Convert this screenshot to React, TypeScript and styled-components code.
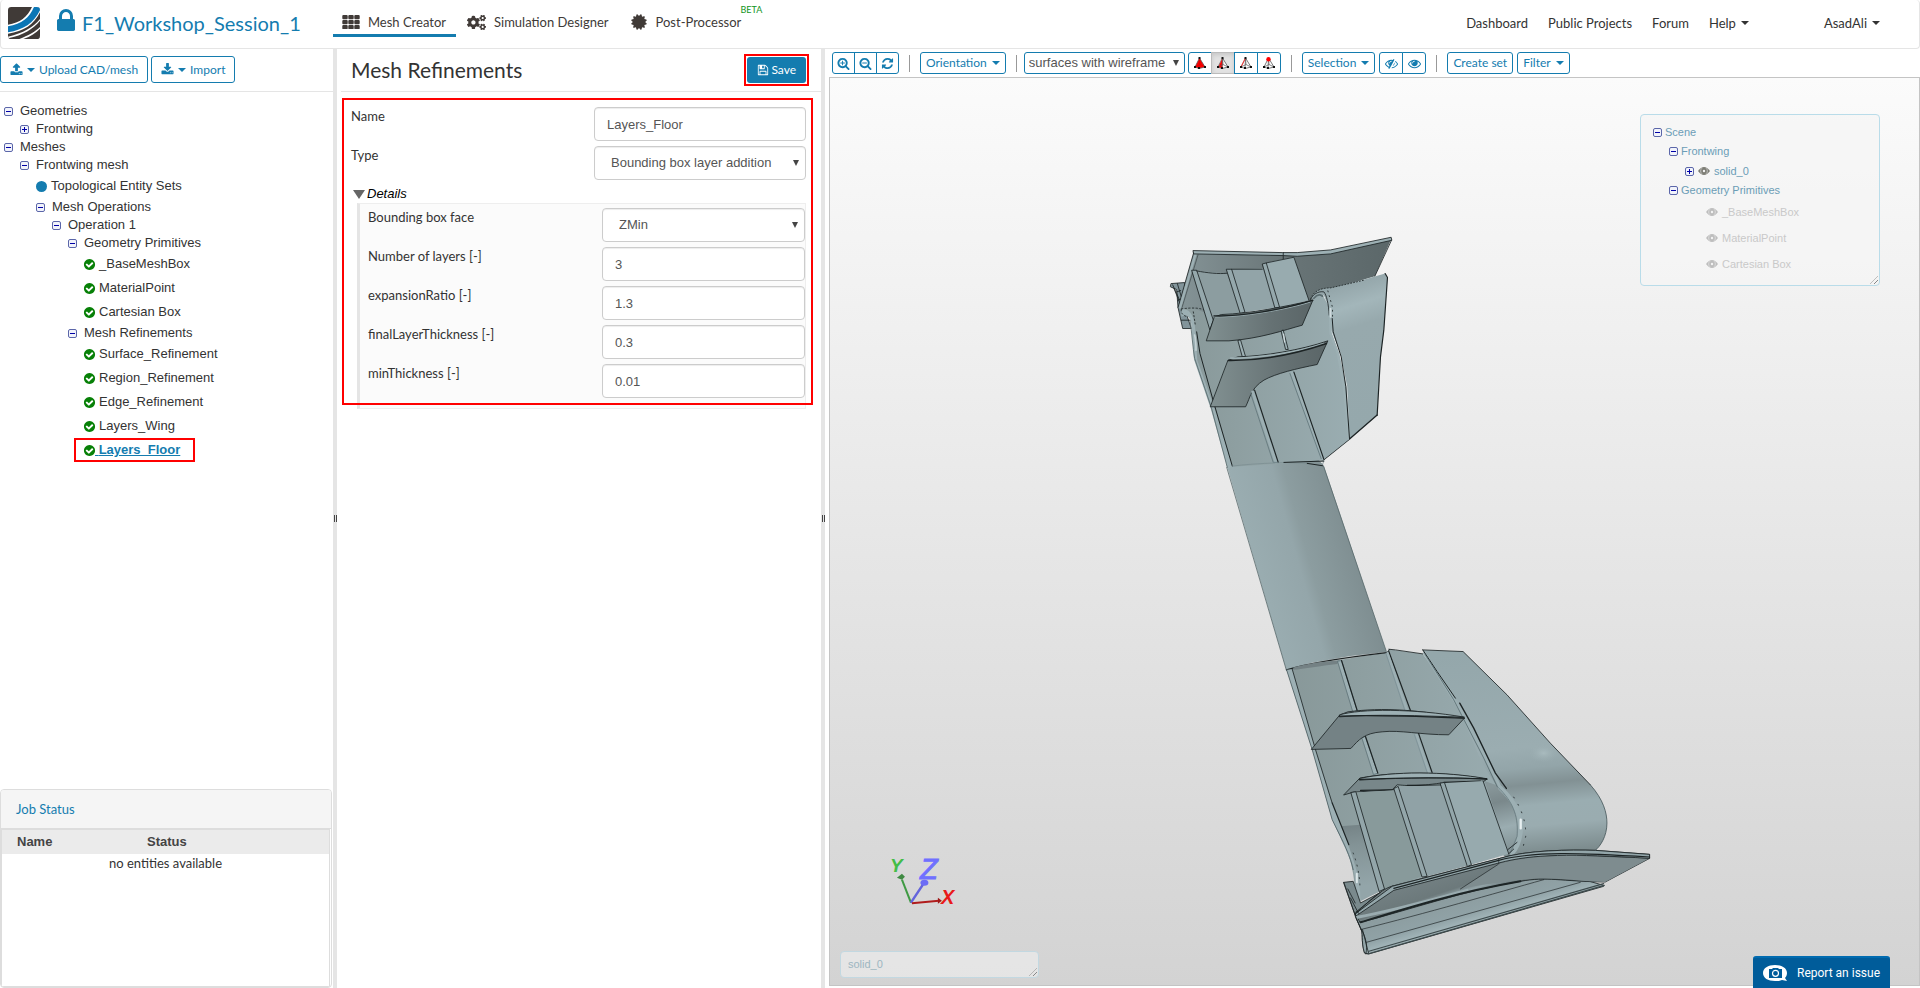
import React from "react";
import styled, { createGlobalStyle, css } from "styled-components";
import { FaCogs } from "react-icons/fa";

const blue = "#147caf";
const line = "#e5e5e5";
const sans = `"Liberation Sans", Arial, sans-serif`;
const lato = `Lato, "Liberation Sans", sans-serif`;

const GlobalStyle = createGlobalStyle`
  *, *::before, *::after { box-sizing: border-box; }
  body { margin: 0; background: #fff; color: #333; font: 13px/20px ${lato}; }
  ul { list-style: none; margin: 0; padding: 0; }
  button, input, select { margin: 0; font: inherit; color: inherit; }
  a { color: inherit; text-decoration: none; }
`;

/* ---------- icons ---------- */

const glyphs = {
  lock: "M640 768h512v-192q0-106-75-181t-181-75-181 75-75 181v192zm832 96v576q0 40-28 68t-68 28h-960q-40 0-68-28t-28-68v-576q0-40 28-68t68-28h32v-192q0-184 132-316t316-132 316 132 132 316v192h32q40 0 68 28t28 68z",
  certificate:
    "M1504 896l138 135q30 28 20 70-12 41-52 51l-188 48 53 186q12 41-19 70-29 31-70 19l-186-53-48 188q-10 40-51 52-12 2-19 2-31 0-51-22l-135-138-135 138q-28 30-70 20-41-11-51-52l-48-188-186 53q-41 12-70-19-31-29-19-70l53-186-188-48q-40-10-52-51-10-42 20-70l138-135-138-135q-30-28-20-70 12-41 52-51l188-48-53-186q-12-41 19-70 29-31 70-19l186 53 48-188q10-41 51-51 41-12 70 19l135 139 135-139q29-30 70-19 41 10 51 51l48 188 186-53q41-12 70 19 31 29 19 70l-53 186 188 48q40 10 52 51 10 42-20 70z",
  upload:
    "M1344 1472q0-26-19-45t-45-19-45 19-19 45 19 45 45 19 45-19 19-45zm256 0q0-26-19-45t-45-19-45 19-19 45 19 45 45 19 45-19 19-45zm128-224v320q0 40-28 68t-68 28h-1472q-40 0-68-28t-28-68v-320q0-40 28-68t68-28h427q21 56 70.5 92t110.5 36h256q61 0 110.5-36t70.5-92h427q40 0 68 28t28 68zm-325-648q-17 40-59 40h-256v448q0 26-19 45t-45 19h-256q-26 0-45-19t-19-45v-448h-256q-42 0-59-40-17-39 14-69l448-448q18-19 45-19t45 19l448 448q31 30 14 69z",
  download:
    "M1344 1344q0-26-19-45t-45-19-45 19-19 45 19 45 45 19 45-19 19-45zm256 0q0-26-19-45t-45-19-45 19-19 45 19 45 45 19 45-19 19-45zm128-224v320q0 40-28 68t-68 28h-1472q-40 0-68-28t-28-68v-320q0-40 28-68t68-28h465l135 136q58 56 136 56t136-56l136-136h464q40 0 68 28t28 68zm-325-569q17 41-14 70l-448 448q-18 19-45 19t-45-19l-448-448q-31-29-14-70 17-39 59-39h256v-448q0-26 19-45t45-19h256q26 0 45 19t19 45v448h256q42 0 59 39z",
  floppy:
    "M512 1536h768v-384h-768v384zm896 0h128v-896q0-14-10-38.5t-20-34.5l-281-281q-10-10-34-20t-39-10v416q0 40-28 68t-68 28h-576q-40 0-68-28t-28-68v-416h-128v1280h128v-416q0-40 28-68t68-28h832q40 0 68 28t28 68v416zm-384-928v-320q0-13-9.5-22.5t-22.5-9.5h-192q-13 0-22.5 9.5t-9.5 22.5v320q0 13 9.5 22.5t22.5 9.5h192q13 0 22.5-9.5t9.5-22.5zm640 32v928q0 40-28 68t-68 28h-1344q-40 0-68-28t-28-68v-1344q0-40 28-68t68-28h928q40 0 88 20t76 48l280 280q28 28 48 76t20 88z",
  zoomIn:
    "M1088 800v64q0 13-9.5 22.5t-22.5 9.5h-224v224q0 13-9.5 22.5t-22.5 9.5h-64q-13 0-22.5-9.5t-9.5-22.5v-224h-224q-13 0-22.5-9.5t-9.5-22.5v-64q0-13 9.5-22.5t22.5-9.5h224v-224q0-13 9.5-22.5t22.5-9.5h64q13 0 22.5 9.5t9.5 22.5v224h224q13 0 22.5 9.5t9.5 22.5zm128 32q0-185-131.5-316.5t-316.5-131.5-316.5 131.5-131.5 316.5 131.5 316.5 316.5 131.5 316.5-131.5 131.5-316.5zm512 832q0 53-37.5 90.5t-90.5 37.5q-54 0-90-38l-343-342q-179 124-399 124-143 0-273.5-55.5t-225-150-150-225-55.5-273.5 55.5-273.5 150-225 225-150 273.5-55.5 273.5 55.5 225 150 150 225 55.5 273.5q0 220-124 399l343 343q37 37 37 90z",
  zoomOut:
    "M1088 800v64q0 13-9.5 22.5t-22.5 9.5h-576q-13 0-22.5-9.5t-9.5-22.5v-64q0-13 9.5-22.5t22.5-9.5h576q13 0 22.5 9.5t9.5 22.5zm128 32q0-185-131.5-316.5t-316.5-131.5-316.5 131.5-131.5 316.5 131.5 316.5 316.5 131.5 316.5-131.5 131.5-316.5zm512 832q0 53-37.5 90.5t-90.5 37.5q-54 0-90-38l-343-342q-179 124-399 124-143 0-273.5-55.5t-225-150-150-225-55.5-273.5 55.5-273.5 150-225 225-150 273.5-55.5 273.5 55.5 225 150 150 225 55.5 273.5q0 220-124 399l343 343q37 37 37 90z",
  refresh:
    "M1639 1056q0 5-1 7-64 268-268 434.5t-478 166.5q-146 0-282.5-55t-243.5-157l-129 129q-19 19-45 19t-45-19-19-45v-448q0-26 19-45t45-19h448q26 0 45 19t19 45-19 45l-137 137q71 66 161 102t187 36q134 0 250-65t186-179q11-17 53-117 8-23 30-23h192q13 0 22.5 9.5t9.5 22.5zm25-800v448q0 26-19 45t-45 19h-448q-26 0-45-19t-19-45 19-45l138-138q-148-137-349-137-134 0-250 65t-186 179q-11 17-53 117-8 23-30 23h-199q-13 0-22.5-9.5t-9.5-22.5v-7q65-268 270-434.5t480-166.5q146 0 284 55.5t245 156.5l130-129q19-19 45-19t45 19 19 45z",
  eye: "M1664 960q-152-236-381-353 61 104 61 225 0 185-131.5 316.5t-316.5 131.5-316.5-131.5-131.5-316.5q0-121 61-225-229 117-381 353 133 205 333.5 326.5t434.5 121.5 434.5-121.5 333.5-326.5zm-720-384q0-20-14-34t-34-14q-125 0-214.5 89.5t-89.5 214.5q0 20 14 34t34 14 34-14 14-34q0-86 61-147t147-61q20 0 34-14t14-34zm848 384q0 34-20 69-140 230-376.5 368.5t-499.5 138.5-499.5-139-376.5-368q-20-35-20-69t20-69q140-229 376.5-368t499.5-139 499.5 139 376.5 368q20 35 20 69z",
  eyeSlash:
    "M555 1335l78-141q-87-63-136-159t-49-203q0-121 61-225-229 117-381 353 167 258 427 375zm389-759q0-20-14-34t-34-14q-125 0-214.5 89.5t-89.5 214.5q0 20 14 34t34 14 34-14 14-34q0-86 61-147t147-61q20 0 34-14t14-34zm363-191q0 7-1 9-106 189-316 567t-315 566l-49 89q-10 16-28 16-12 0-134-70-16-10-16-28 0-12 44-87-143-65-263.5-173t-208.5-245q-20-31-20-69t20-69q153-235 380-371t496-136q89 0 180 17l54-97q10-16 28-16 5 0 18 6t31 15.5 33 18.5 31.5 18.5 19.5 11.5q16 10 16 27zm37 447q0 139-79 253.5t-209 164.5l280-502q8 45 8 84zm448 128q0 35-20 69-39 64-109 145-150 172-347.5 267t-419.5 95l74-132q212-18 392.5-137t301.5-307q-115-179-282-294l63-112q95 64 182.5 153t144.5 184q20 34 20 69z",
  check:
    "M1412 734q0-28-18-46l-91-90q-19-19-45-19t-45 19l-408 407-226-226q-19-19-45-19t-45 19l-91 90q-18 18-18 46 0 27 18 45l362 362q19 19 45 19 27 0 46-19l543-543q18-18 18-45zm252 162q0 209-103 385.5t-279.5 279.5-385.5 103-385.5-103-279.5-279.5-103-385.5 103-385.5 279.5-279.5 385.5-103 385.5 103 279.5 279.5 103 385.5z",
};

const GlyphSvg = styled.svg`
  display: block;
  flex: none;
  fill: currentColor;
`;

const Glyph = ({ name, size = 14 }: { name: keyof typeof glyphs; size?: number }) => (
  <GlyphSvg width={size} height={size} viewBox="0 0 1792 1792" aria-hidden="true">
    <path d={glyphs[name]} />
  </GlyphSvg>
);

const GridIcon = () => (
  <GlyphSvg width="18" height="14" viewBox="0 0 18 14" aria-hidden="true">
    {[0, 5, 10].map((y) =>
      [0, 6, 12].map((x) => <rect key={`${x}-${y}`} x={x + 0.3} y={y} width="5.4" height="4.2" rx="1" />)
    )}
  </GlyphSvg>
);

const Logo = () => (
  <GlyphSvg width="32" height="32" viewBox="0 0 96 96" aria-hidden="true">
    <clipPath id="logoClip">
      <rect width="96" height="96" rx="10" />
    </clipPath>
    <g clipPath="url(#logoClip)">
      <rect width="96" height="96" fill="#403a37" />
      <path d="M0 53C36 48 58 30 72 0H96V96H0z" fill="#fff" />
      <path d="M0 58C42 51 64 32 78 0H96V10C77 48 47 69 0 76z" fill="#0b76b5" />
      <path d="M0 80C48 74 78 52 96 16V36C76 61 46 78 0 89z" fill="#403a37" />
      <path d="M0 94C46 84 76 66 96 41V60C82 74 60 86 34 96H0z" fill="#403a37" />
      <path d="M46 96C68 88 84 78 96 65V96z" fill="#403a37" />
    </g>
  </GlyphSvg>
);

const ToggleBox = ({ open }: { open: boolean }) => (
  <GlyphSvg width="9" height="9" viewBox="0 0 9 9" aria-hidden="true">
    <rect x="0.5" y="0.5" width="8" height="8" rx="1.5" fill="#f1f3fb" stroke="#5b66a9" />
    <path d={open ? "M2 4h5v1H2z" : "M2 4h5v1H2zM4 2h1v5H4z"} fill="#0000a8" />
  </GlyphSvg>
);

const Dot = styled.span`
  width: 11px;
  height: 11px;
  border-radius: 50%;
  background: ${blue};
`;

const Caret = styled.span`
  display: inline-block;
  flex: none;
  border-top: 4px solid currentColor;
  border-left: 4px solid transparent;
  border-right: 4px solid transparent;
`;

const ResizeGrip = styled.span`
  position: absolute;
  right: 1px;
  bottom: 1px;
  width: 8px;
  height: 8px;
  background: repeating-linear-gradient(135deg, transparent 0 2px, #888 2px 3px);
  clip-path: polygon(100% 0, 100% 100%, 0 100%);
`;

/* ---------- page frame ---------- */

const Page = styled.div`
  display: flex;
  flex-direction: column;
  height: 100vh;
  overflow: hidden;
`;

const Header = styled.header`
  display: flex;
  flex: none;
  align-items: center;
  height: 49px;
  padding: 0 39px 0 7px;
  border: 1px solid ${line};
  border-top: 0;
  border-radius: 4px;
`;

const Project = styled.a`
  display: flex;
  align-items: center;
  width: 325px;
  padding-bottom: 2px;
  color: ${blue};
  font-size: 20px;
  line-height: 24px;
`;

const LockSlot = styled.span`
  margin: -4px 2px 0 12px;
`;

const Tabs = styled.nav`
  display: flex;
  align-items: flex-start;
  gap: 2px;
  height: 37px;
  align-self: flex-start;
`;

const Tab = styled.a<{ $active?: boolean }>`
  position: relative;
  display: flex;
  align-items: center;
  gap: 8px;
  height: 37px;
  padding: 10px 10px 0 9px;
  color: #403a37;
  border-bottom: 3px solid ${(p) => (p.$active ? blue : "transparent")};
`;

const Beta = styled.sup`
  position: absolute;
  top: 4px;
  right: -11px;
  color: #119422;
  font-size: 9px;
  line-height: 12px;
`;

const Menu = styled.nav`
  display: flex;
  align-items: center;
  gap: 20px;
  margin-left: auto;
  padding-bottom: 2px;
`;

const MenuLink = styled.a<{ $user?: boolean }>`
  display: flex;
  align-items: center;
  gap: 5px;
  margin-left: ${(p) => (p.$user ? "55px" : "0")};
`;

const Workspace = styled.main`
  display: grid;
  flex: 1;
  grid-template-columns: 333px 4px 484px 4px minmax(0, 1fr);
  min-height: 0;
`;

const Splitter = styled.div`
  display: flex;
  align-items: center;
  justify-content: center;
  background: ${line};

  &::before {
    content: "";
    width: 3px;
    height: 7px;
    border: solid #444;
    border-width: 0 1px;
  }
`;

const Panel = styled.section`
  display: flex;
  flex-direction: column;
  min-width: 0;
`;

const PanelBar = styled.div<{ $inset?: boolean }>`
  display: flex;
  flex: none;
  align-items: center;
  gap: 3px;
  height: 43px;
  padding-bottom: 1px;
  border-bottom: 1px solid ${line};
  ${(p) =>
    p.$inset &&
    css`
      justify-content: space-between;
      margin-left: 4px;
      padding: 0 12px 1px 10px;
    `}
`;

const outline = css`
  display: flex;
  align-items: center;
  color: ${blue};
  background: #fff;
  border: 1px solid ${blue};
  border-radius: 3px;
  font-size: 12px;
`;

const ActionButton = styled.button`
  ${outline}
  gap: 4px;
  height: 27px;
  padding: 0 9px;
`;

/* ---------- model tree ---------- */

const TreeArea = styled.div`
  flex: 1;
  min-height: 0;
  padding: 10px 4px;
  overflow: hidden;
  font-family: ${sans};
  font-size: 13px;
`;

const Branch = styled.ul`
  ul { padding-left: 16px; }
`;

const TreeRow = styled.div<{ $leaf?: boolean; $selected?: boolean }>`
  display: flex;
  align-items: center;
  gap: ${(p) => (p.$leaf ? "4px" : "7px")};
  height: ${(p) => (p.$leaf ? "24px" : "18px")};

  ${(p) =>
    p.$selected &&
    css`
      width: 121px;
      margin-left: -10px;
      padding-left: 8px;
      border: 2px solid #f00;
      gap: 0;

      a {
        color: ${blue};
        font-weight: bold;
        text-decoration: underline;
        white-space: pre;
      }
    `}
`;

const CheckMark = styled.span`
  color: #078007;
  width: 11px;
  display: flex;
  justify-content: center;
`;

type Node = { label: string; kids?: Node[]; closed?: boolean; icon?: "dot" | "check"; selected?: boolean };

const leaves = (...names: string[]): Node[] => names.map((label) => ({ label, icon: "check" }));

const tree: Node[] = [
  { label: "Geometries", kids: [{ label: "Frontwing", closed: true }] },
  {
    label: "Meshes",
    kids: [
      {
        label: "Frontwing mesh",
        kids: [
          { label: "Topological Entity Sets", icon: "dot" },
          {
            label: "Mesh Operations",
            kids: [
              {
                label: "Operation 1",
                kids: [
                  { label: "Geometry Primitives", kids: leaves("_BaseMeshBox", "MaterialPoint", "Cartesian Box") },
                  {
                    label: "Mesh Refinements",
                    kids: [
                      ...leaves("Surface_Refinement", "Region_Refinement", "Edge_Refinement", "Layers_Wing"),
                      { label: "Layers_Floor", icon: "check", selected: true },
                    ],
                  },
                ],
              },
            ],
          },
        ],
      },
    ],
  },
];

const TreeNode = ({ node }: { node: Node }) => (
  <li>
    <TreeRow $leaf={!!node.icon} $selected={node.selected}>
      {node.icon === "dot" && <Dot />}
      {node.icon === "check" && (
        <CheckMark>
          <Glyph name="check" size={13} />
        </CheckMark>
      )}
      {!node.icon && <ToggleBox open={!node.closed} />}
      <a href="#node">
        {node.selected && " "}
        {node.label}
      </a>
    </TreeRow>
    {node.kids && (
      <ul>
        {node.kids.map((kid) => (
          <TreeNode key={kid.label} node={kid} />
        ))}
      </ul>
    )}
  </li>
);

/* ---------- job status ---------- */

const Jobs = styled.section`
  flex: none;
  height: 199px;
  margin-right: 1px;
  padding-right: 1px;
  border: 1px solid #ddd;
  border-radius: 4px;
  overflow: hidden;
`;

const JobsTitle = styled.h2`
  margin: 0 -1px 0 0;
  padding: 9px 15px;
  color: ${blue};
  background: #f5f5f5;
  border-bottom: 1px solid #ddd;
  font-size: 13px;
  font-weight: normal;
  line-height: 20px;
`;

const JobsBody = styled.div`
  height: 158px;
  border: 1px solid #ddd;
`;

const JobsTable = styled.table`
  width: 100%;
  border-collapse: collapse;
  table-layout: fixed;

  th {
    width: 130px;
    height: 24px;
    padding: 0 0 0 15px;
    background: #ebebeb;
    color: #444;
    font: bold 13px/20px ${sans};
    text-align: left;
  }
  th + th { width: auto; }
  td {
    padding: 0;
    line-height: 18px;
    text-align: center;
  }
`;

/* ---------- refinement form ---------- */

const FormTitle = styled.h1`
  margin: 0;
  font-size: 21px;
  font-weight: normal;
  line-height: 28px;
`;

const SaveFrame = styled.span`
  padding: 1px;
  border: 2px solid #f00;
`;

const SaveButton = styled.button`
  display: flex;
  align-items: center;
  gap: 2px;
  height: 26px;
  padding: 0 10px;
  color: #fff;
  background: ${blue};
  border: 0;
  border-radius: 3px;
  font-size: 12px;
`;

const Form = styled.form`
  position: relative;
  margin: 6px 8px 0 5px;
  padding: 9px 7px 0 9px;

  &::after {
    content: "";
    position: absolute;
    inset: 0 0 4px;
    border: 2px solid #f00;
    pointer-events: none;
  }
`;

const Field = styled.div`
  display: flex;
  justify-content: space-between;
  height: 39px;
`;

const Label = styled.label`
  display: block;
  line-height: 18px;
`;

const fieldBox = css`
  height: 34px;
  width: 100%;
  color: #555;
  background: #fff;
  border: 1px solid #ccc;
  border-radius: 4px;
  box-shadow: inset 0 1px 1px rgba(0, 0, 0, 0.075);
  font-family: ${sans};
  font-size: 13px;
`;

const Control = styled.span<{ $inner?: boolean }>`
  position: relative;
  width: ${(p) => (p.$inner ? "203px" : "212px")};
`;

const TextInput = styled.input`
  ${fieldBox}
  padding: 0 12px;
`;

const Select = styled.select`
  ${fieldBox}
  appearance: none;
  padding: 0 16px;
`;

const SelectArrow = styled.span`
  position: absolute;
  top: 14px;
  right: 7px;
  border-top: 6px solid #444;
  border-left: 3px solid transparent;
  border-right: 3px solid transparent;
  pointer-events: none;
`;

const DetailsHeading = styled.h3`
  display: flex;
  align-items: center;
  gap: 2px;
  height: 18px;
  margin: 0 0 0 2px;
  color: #000;
  font: italic 13px/18px ${sans};

  &::before {
    content: "";
    border-top: 9px solid #666;
    border-left: 6px solid transparent;
    border-right: 6px solid transparent;
  }
`;

const Group = styled.div`
  margin-left: 6px;
  padding: 4px 0 5px 8px;
  background: #fbfbfb;
  border: 1px solid #eee;
  border-left: 3px solid ${line};
`;

type FieldSpec = { id: string; label: string; value: string; choice?: boolean };

const FormField = ({ spec, inner }: { spec: FieldSpec; inner?: boolean }) => (
  <Field>
    <Label htmlFor={spec.id}>{spec.label}</Label>
    <Control $inner={inner}>
      {spec.choice ? (
        <>
          <Select id={spec.id} defaultValue={spec.value}>
            <option>{spec.value}</option>
          </Select>
          <SelectArrow />
        </>
      ) : (
        <TextInput id={spec.id} defaultValue={spec.value} />
      )}
    </Control>
  </Field>
);

const mainFields: FieldSpec[] = [
  { id: "name", label: "Name", value: "Layers_Floor" },
  { id: "type", label: "Type", value: "Bounding box layer addition", choice: true },
];

const detailFields: FieldSpec[] = [
  { id: "face", label: "Bounding box face", value: "ZMin", choice: true },
  { id: "layers", label: "Number of layers [-]", value: "3" },
  { id: "ratio", label: "expansionRatio [-]", value: "1.3" },
  { id: "final", label: "finalLayerThickness [-]", value: "0.3" },
  { id: "min", label: "minThickness [-]", value: "0.01" },
];

/* ---------- 3D viewer ---------- */

const Viewer = styled(Panel)`
  padding: 0 0 2px 4px;
`;

const Toolbar = styled.div`
  display: flex;
  flex: none;
  align-items: center;
  height: 28px;
  padding: 0 3px;
`;

const ToolButton = styled.button`
  ${outline}
  gap: 5px;
  height: 22px;
  padding: 0 5px;
  white-space: nowrap;
`;

const ToolSet = styled.div`
  display: flex;
  gap: 4px;
`;

const ToolGroup = styled.div<{ $narrow?: boolean }>`
  display: flex;

  button {
    justify-content: center;
    width: ${(p) => (p.$narrow ? "23px" : "24px")};
    padding: 0;
    border-radius: 0;
  }
  button + button { margin-left: -1px; }
  button:first-child { border-radius: 3px 0 0 3px; }
  button:last-child { border-radius: 0 3px 3px 0; }
  button[aria-pressed="true"] {
    background: #e2e2e2;
    border-color: #bbb;
    box-shadow: inset 0 2px 4px rgba(0, 0, 0, 0.12);
  }
`;

const Divider = styled.span`
  width: 1px;
  height: 17px;
  margin: 0 10px;
  background: #999;
`;

const RenderMode = styled.span`
  position: relative;
  margin: 0 3px 0 -3px;

  select {
    display: block;
    width: 161px;
    height: 22px;
    padding: 0 4px;
    appearance: none;
    color: #555;
    background: #fff;
    border: 1px solid ${blue};
    border-radius: 3px;
    font: 13px/18px ${sans};
  }
  ${SelectArrow} { top: 8px; right: 6px; }
`;

const PickIcon = ({ mode }: { mode: "solid" | "face" | "edge" | "point" }) => (
  <GlyphSvg width="12" height="12" viewBox="0 0 12 12" aria-hidden="true">
    <path d="M5.500 1 1 10l4 1.500 6-1.500z" fill={mode === "solid" ? "#f00" : "#fff"} stroke="#555" strokeWidth=".8" />
    {mode === "face" && <path d="M5.500 1 1.500 10 5.500 11.500z" fill="#f00" />}
    <path d="M5.500 1 5 11.500M1 10 6 7.500 11 10M5.500 1 6 7.500" fill="none" stroke={mode === "solid" ? "#d00" : "#555"} strokeWidth=".7" />
    {mode === "edge" && <path d="M5.500 1 1 10" stroke="#f33" strokeWidth="1" />}
    <path d="M0 9h2v2H0zM4 10h2v2H4zM10 9h2v2h-2z" fill="#111" />
    {mode === "point" ? <circle cx="5.500" cy="2.200" r="2.200" fill="#f00" /> : <path d="M4.500 0h2v2h-2z" fill="#111" />}
  </GlyphSvg>
);

const Canvas = styled.div`
  position: relative;
  flex: 1;
  min-height: 0;
  border: 1px solid #c4c4c4;
  background: linear-gradient(#fbfbfb, #d3d3d3);
`;

const Scene = styled.svg`
  display: block;
  width: 100%;
  height: 100%;
`;

const ScenePanel = styled.div`
  position: absolute;
  top: 36px;
  right: 39px;
  width: 240px;
  height: 172px;
  padding: 8px 12px;
  background: rgba(245, 245, 245, 0.7);
  border: 1px solid #b9dce9;
  border-radius: 4px;
  color: #6b9db6;
  font: 11px/19px ${sans};

  ul ul { padding-left: 16px; }
`;

const SceneRow = styled.div<{ $kind?: "eye" | "hidden" }>`
  display: flex;
  align-items: center;
  gap: 3px;
  height: ${(p) => (p.$kind === "hidden" ? 26 : p.$kind === "eye" ? 20 : 19)}px;
  ${(p) =>
    p.$kind === "hidden" &&
    css`
      padding: 0 0 2px 20px;
      color: #c9c9c9;
    `}
`;

const EyeSlot = styled.span`
  display: flex;
  margin: 0 1px;
`;

const SolidEye = ({ color }: { color: string }) => (
  <EyeSlot>
    <GlyphSvg width="12" height="8" viewBox="0 0 12 8" aria-hidden="true">
      <path d="M0 4Q6-4 12 4Q6 12 0 4z" fill={color} />
      <path d="M4 1.200A3.600 3.600 0 0 0 4 6.800M8 1.200A3.600 3.600 0 0 1 8 6.800" fill="none" stroke="#eee" strokeWidth=".6" />
      <circle cx="6" cy="4" r="1.200" fill="#f2f2f2" />
    </GlyphSvg>
  </EyeSlot>
);

const Picked = styled.div`
  position: absolute;
  left: 10px;
  bottom: 7px;
  width: 199px;
  height: 27px;
  padding: 3px 7px;
  background: rgba(245, 245, 245, 0.5);
  border: 1px solid #c2d8e1;
  border-radius: 4px;
  color: #9db6c1;
  font: 11px/18px ${sans};
`;

const Report = styled.button`
  position: fixed;
  right: 30px;
  bottom: 0;
  display: flex;
  align-items: center;
  gap: 9px;
  height: 32px;
  padding: 0 10px;
  color: #fff;
  background: #005c9a;
  border: 0;
  border-top: 2px solid #006bb0;
  border-radius: 3px 3px 0 0;
  font: 12px/16px Roboto, sans-serif;
  white-space: nowrap;
`;

const lit = "#9db0b4";
const ink = "#1c2324";

const Wing = () => (
  <Scene viewBox="829 78 1090 907" role="img" aria-label="Front wing geometry">
    <defs>
      <linearGradient id="span" gradientUnits="userSpaceOnUse" x1="1255" y1="575" x2="1362" y2="545">
        <stop offset="0" stopColor="#9aadb1" />
        <stop offset=".4" stopColor="#94a6aa" />
        <stop offset=".5" stopColor="#8c9da0" />
        <stop offset="1" stopColor="#7d8c8f" />
      </linearGradient>
      <linearGradient id="plate">
        <stop offset="0" stopColor="#859497" />
        <stop offset=".5" stopColor="#697577" />
        <stop offset="1" stopColor="#5b6769" />
      </linearGradient>
      <linearGradient id="vane">
        <stop offset="0" stopColor="#819091" />
        <stop offset=".6" stopColor="#667274" />
        <stop offset="1" stopColor="#5a6567" />
      </linearGradient>
      <linearGradient id="skin">
        <stop offset="0" stopColor="#889899" />
        <stop offset="1" stopColor="#9aadb1" />
      </linearGradient>
      <linearGradient id="flapTop" x1="0" y1="0" x2=".15" y2="1">
        <stop offset="0" stopColor="#849497" />
        <stop offset=".15" stopColor="#96a8ac" />
        <stop offset=".27" stopColor="#a3b6ba" />
        <stop offset=".4" stopColor="#97a9ad" />
        <stop offset="1" stopColor="#95a8ac" />
      </linearGradient>
      <linearGradient id="flapLow" gradientUnits="userSpaceOnUse" x1="720" y1="90" x2="780" y2="710">
        <stop offset="0" stopColor="#94a7ab" />
        <stop offset=".48" stopColor="#9badb1" />
        <stop offset=".58" stopColor="#93a5a9" />
        <stop offset=".66" stopColor="#829194" />
        <stop offset=".76" stopColor="#9aadb1" />
        <stop offset=".86" stopColor="#9aacb0" />
        <stop offset="1" stopColor="#7b8a8c" />
      </linearGradient>
      <linearGradient id="rail" gradientUnits="userSpaceOnUse" x1="600" y1="820" x2="630" y2="925">
        <stop offset="0" stopColor="#8b9b9e" />
        <stop offset=".6" stopColor="#90a2a6" />
        <stop offset=".85" stopColor="#a2b5b9" />
        <stop offset="1" stopColor="#7c8b8e" />
      </linearGradient>
      <linearGradient id="lowPlate" gradientUnits="userSpaceOnUse" x1="560" y1="740" x2="600" y2="860">
        <stop offset="0" stopColor="#758285" />
        <stop offset=".55" stopColor="#6c797b" />
        <stop offset=".7" stopColor="#93a4a8" />
        <stop offset=".95" stopColor="#4a5557" />
      </linearGradient>
      <linearGradient id="curlLeft" gradientUnits="userSpaceOnUse" x1="270" y1="610" x2="300" y2="800">
        <stop offset="0" stopColor="#748285" />
        <stop offset=".35" stopColor="#839396" />
        <stop offset="1" stopColor="#93a5a9" />
      </linearGradient>
      <linearGradient id="curlRight" gradientUnits="userSpaceOnUse" x1="700" y1="500" x2="745" y2="690">
        <stop offset="0" stopColor="#879699" />
        <stop offset=".25" stopColor="#7a888b" />
        <stop offset=".65" stopColor="#9badb1" />
        <stop offset="1" stopColor="#839396" />
      </linearGradient>
      <radialGradient id="glint">
        <stop offset="0" stopColor="#adbfc2" stopOpacity=".8" />
        <stop offset="1" stopColor="#9badb1" stopOpacity="0" />
      </radialGradient>
    </defs>

    <path d="M1226 465 1240 460H1318L1323 465 1386 652 1350 656 1310 663 1286 671z" fill="url(#span)" />
    <path d="M1323 466 1386 652M1226 467 1286 671" stroke="#56676a" strokeWidth=".8" />

    {/* upper end of the wing, three drawing units to a pixel */}
    <g
      transform="translate(1150 220) scale(.33333)"
      fill="none"
      stroke={ink}
      strokeWidth="2.500"
      strokeLinejoin="round"
      strokeLinecap="round"
    >
      <path d="M62 190 102 187 100 260 122 325 96 325 82 262 78 208 60 200z" fill="#82949a" />
      <path d="M70 205 90 255M80 190 92 230M92 300H118M78 215l12-4M82 240l12-4M66 194l20 44" />
      <path d="M130 94 398 101 440 106 540 98 723 55 673 168 600 190 480 240 200 290 100 270 82 262z" fill="url(#plate)" stroke="none" />
      <path d="M723 60 673 168M130 94 82 262" />
      <path d="M142 104 94 262" stroke="#475254" />
      <path d="M136 96 88 262" stroke={lit} strokeWidth="7" />
      <path d="M128 91 395 97 440 97 540 89 722 51 724 60 540 101 440 108 398 106 130 101z" fill={lit} />
      <path d="M398 97v20" />
      <path
        d="M478 238C490 210 515 203 540 203L620 184 704 160 711 172 700 330 690 410 680 585 597 657 590 500 570 400 542 330 538 270 520 225z"
        fill="url(#flapTop)"
        stroke="none"
      />
      <path d="M704 160 711 172 700 330 690 410 680 585" strokeWidth="3.500" />
      <path d="M680 585 597 657 520 718" strokeWidth="4" />
      <path d="M480 236C490 210 515 203 540 203L640 180" strokeDasharray="3 6" />
      <path
        d="M92 268C130 258 170 275 182 300L430 250 482 240 515 222 536 260 540 330 566 400 588 500 597 657 520 718 470 726 245 740 182 560 145 455 130 415 122 300z"
        fill="url(#skin)"
        stroke="none"
      />
      <path d="M92 268C118 262 132 290 134 330L140 420 190 560 245 738 232 748 180 565 130 418 122 310C118 288 108 280 92 290z" fill={lit} stroke="none" />
      <path d="M118 300C124 340 126 380 132 415L182 562 230 742" stroke="#56676a" />
      <path d="M138 335 148 400 190 550 245 738" strokeWidth="3" />
      <path d="M92 266C125 262 150 262 165 272M92 268C90 280 100 288 112 290M128 275l6 40" strokeDasharray="4 7" />
      <path d="M132 345C136 362 136 376 136 390" stroke="#c5d2d5" strokeWidth="5" />
      <path d="M124 150 228 160 275 278 196 292 182 306z" fill="#8c9da0" stroke="none" />
      <path d="M238 147 338 145 380 262 280 276z" fill="#92a4a8" stroke="none" />
      <path d="M342 128 430 110 475 240 385 262z" fill="#98abaf" stroke="none" />
      <path d="M124 150H138L188 300 178 328zM228 147H243L283 276 270 280zM336 131 347 128 387 261 374 263z" fill="#95a8ac" />
      <path d="M138 152C170 158 205 162 228 159M243 147H335M347 128 430 111 475 240" />
      <path d="M192 290 212 283C300 280 400 260 487 240L455 315C400 330 330 355 235 362L168 362z" fill="url(#vane)" />
      <path d="M192 290C270 292 400 270 478 246" stroke={lit} strokeWidth="3" />
      <path d="M190 287C270 290 400 268 487 240" strokeWidth="4" />
      <path d="M262 362 275 410H285L270 360zM392 335 405 388H413L398 330z" fill={lit} />
      <path d="M399 342 402 365" stroke="#d0dbde" strokeWidth="4" />
      <path d="M233 420 262 410C340 408 450 390 532 362L500 433C440 445 375 460 340 480C300 505 300 530 285 560H180z" fill="url(#vane)" />
      <path d="M240 414C330 414 440 396 520 370" stroke={lit} strokeWidth="5" />
      <path d="M233 421C330 422 440 400 528 370" strokeWidth="4" />
      <path d="M306 515 376 727M424 458 516 718" stroke={lit} strokeWidth="8" />
      <path d="M300 520 368 727H383M418 460 512 716" stroke="#61767b" />
      <path d="M312 510 383 727M430 456 520 718" strokeWidth="3.500" />
      <path d="M480 238C486 222 504 212 520 215C528 224 534 250 536 285" />
      <path d="M490 234C498 224 508 222 516 228" stroke="#5a6b6e" strokeWidth="5" />
      <path d="M540 258C538 290 538 310 540 340L562 400 580 500 595 655" stroke={lit} strokeWidth="7" />
      <path d="M545 295 548 335 572 410 586 500 597 657" strokeWidth="3" />
      <path d="M540 265V290" stroke="#d0dbde" strokeWidth="5" />
      <path d="M532 212 546 262V300" strokeDasharray="3 12" />
      <path d="M245 738C320 728 430 728 520 722L515 736C480 730 430 728 400 728" stroke="#7d8f93" />
      <path d="M400 727 520 723M470 730 516 737" strokeWidth="3" />
    </g>

    {/* lower end of the wing */}
    <g
      transform="translate(1260 620) scale(.33333)"
      fill="none"
      stroke={ink}
      strokeWidth="2.500"
      strokeLinejoin="round"
      strokeLinecap="round"
    >
      <path
        d="M487 90 608 95 740 225 870 370 990 495C1030 540 1040 580 1040 610C1040 650 1020 680 1005 692L740 715 640 640 660 460z"
        fill="url(#flapLow)"
        stroke="none"
      />
      <ellipse cx="850" cy="400" rx="45" ry="28" fill="url(#glint)" stroke="none" />
      <path d="M487 90 608 95 740 225 870 370 990 495" />
      <path d="M990 495C1030 540 1040 580 1040 610C1040 650 1020 680 1005 692" stroke="#46575a" />
      <path
        d="M78 150 150 133 235 120 378 98 385 88 487 102 530 160 600 280 665 430 710 500C770 560 775 590 775 640C770 680 755 695 740 702L395 800 280 850C290 790 270 720 258 690L215 600 155 390z"
        fill="url(#skin)"
        stroke="none"
      />
      <path d="M672 484 705 495C760 550 778 590 775 640C772 670 760 690 745 700z" fill="url(#curlRight)" stroke="none" />
      <path d="M228 620 300 615 365 810 300 845C300 770 270 700 245 665z" fill="url(#curlLeft)" stroke="none" />
      <path d="M78 150C140 130 260 112 378 98" strokeWidth="4" />
      <path d="M98 143C150 128 200 124 235 122L230 132C180 138 130 146 98 150z" fill="#748184" stroke="none" />
      <path d="M385 88 405 90 487 102M380 98 387 89" />
      <path d="M78 150 155 390 215 600C250 680 285 740 285 790V840L300 845C302 770 270 700 262 670L210 540 165 390 95 148z" fill={lit} stroke="none" />
      <path d="M78 150 155 390 215 600C250 670 270 710 278 750" stroke="#4d5e61" />
      <path d="M95 148 165 390 215 550" />
      <path d="M215 550 265 675" strokeWidth="3.500" />
      <path d="M278 700C290 730 298 770 298 800" strokeDasharray="3 16" />
      <path d="M289 762V788" stroke="#dce6e8" strokeWidth="6" />
      <path d="M232 124 243 122 290 272 278 276zM305 354 314 350 352 460 340 464z" fill={lit} stroke="#61767b" />
      <path d="M243 122 290 272M315 350 352 460M385 95 450 272M474 340 515 458" strokeWidth="3.500" />
      <path d="M381 100 440 272M468 345 506 458" stroke={lit} strokeWidth="7" />
      <path d="M376 100 433 272M462 345 500 458" stroke="#7d9297" />
      <path d="M492 100 600 270 690 440 720 505" stroke={lit} strokeWidth="9" />
      <path d="M487 90 530 155 585 235" strokeWidth="3" />
      <path d="M598 250 640 325 705 460 738 506" strokeWidth="4" />
      <path d="M495 105 580 240 670 415 710 500" stroke="#596c70" />
      <path d="M720 505C770 550 785 600 780 640C775 675 765 690 755 700" stroke={lit} strokeWidth="14" />
      <path d="M781 600V626" stroke="#e8f0f1" strokeWidth="7" />
      <path d="M760 532C785 570 798 610 796 650L785 695" strokeDasharray="3 22" />
      <path d="M710 500C765 550 774 600 770 650L750 700" stroke="#687b7f" />
      <path d="M153 388 238 285 262 276C370 262 470 270 612 295L565 345C480 345 420 330 365 336C310 340 295 360 272 385z" fill="#748285" />
      <path d="M238 285C300 266 460 266 612 292C480 288 340 282 238 291z" fill={lit} />
      <path d="M238 289C340 284 480 290 612 295" strokeWidth="3.500" />
      <path d="M250 525 298 475C400 455 550 455 680 478L670 485 540 490C470 500 440 498 410 495L395 510 280 517z" fill="#78878a" />
      <path d="M298 476C400 454 550 454 680 477C550 473 400 474 298 481z" fill={lit} />
      <path d="M298 479C400 474 550 472 680 478M300 512 400 510M440 497 540 496M550 488 660 484" strokeWidth="3.500" />
      <path d="M285 518 400 512 485 770 372 810z" fill="#889a9b" stroke="none" />
      <path d="M413 500 540 497 622 738 498 770z" fill="#90a2a6" stroke="none" />
      <path d="M552 490 668 484 745 702 632 735z" fill="#97aaae" stroke="none" />
      <path d="M272 518 286 516 372 808 357 815zM401 506 413 500 500 770 486 772zM540 490 552 488 633 735 622 740z" fill="#93a6aa" />
      <path d="M668 484 745 702" />
      <path d="M742 690 770 668M745 702 760 688" />

      <path d="M250 788 278 785 300 850 395 800 430 850 320 1003 312 1000C300 960 310 940 300 925L285 890z" fill="#7a8a8d" />
      <path d="M285 890 395 800 900 760 1030 797 1030 800 325 1003 312 1000C300 960 310 940 300 925z" fill="url(#rail)" />
      <path
        d="M285 882C340 830 370 805 400 798L715 717C800 690 930 690 1005 692L1168 704V716L1035 787C900 785 860 770 780 785C620 810 450 870 300 908z"
        fill="url(#lowPlate)"
      />
      <path
        d="M600 808 715 733C800 705 930 706 1165 717L1035 787C940 785 870 768 780 782C720 788 650 797 600 808z"
        fill="#7e8c8f"
        stroke="none"
      />
      <path d="M285 882 395 800 715 717C800 690 930 690 1005 692L1168 704V716C930 702 820 702 715 730L400 812 288 888z" fill="#93a6aa" />
      <path d="M400 806 715 722C820 694 960 700 1168 712" strokeWidth="3.500" />
      <path d="M600 808 712 735M715 717V733" strokeWidth="2" />
      <path d="M290 893C420 868 520 838 620 812" stroke="#9aacb0" strokeWidth="9" />
      <path d="M300 908C430 868 580 820 780 785" stroke="#1d2526" strokeWidth="6" />
      <path d="M300 930C500 880 700 822 850 780M318 968 960 788" strokeWidth="2" />
      <path d="M325 995 1030 792M322 1003 1032 797" stroke="#3d4a4c" strokeWidth="3.500" />
      <path d="M250 788 285 890 300 925C315 950 322 975 316 1003M262 808l22 42M270 835l24 46M306 930 324 1000M285 882 300 870M360 818 285 878" />
    </g>

    {/* orientation axes */}
    <g fill="none" strokeWidth="2">
      <path d="M910 903 901 880" stroke="#3f9a43" />
      <path d="M910 903 922 885" stroke="#6464dc" strokeWidth="2.500" />
      <path d="M911 903.500 938 901" stroke="#b01c1c" />
    </g>
    <path d="M896 878 901 874 904 877 901 880z" fill="#3f8a43" />
    <ellipse cx="923.500" cy="883" rx="4" ry="3" fill="#6c6cf5" />
    <path d="M937 898 941 901 937 904z" fill="#a01818" />
    <g fontFamily="Liberation Sans, Arial, sans-serif" fontStyle="italic" fontWeight="bold">
      <text x="889" y="872" fontSize="19" fill="#43bd47">Y</text>
      <text x="919" y="879" fontSize="29" fontWeight="normal" stroke="#7070ff" fill="#7070ff">Z</text>
      <text x="940" y="904" fontSize="20" fill="#e81a1a">X</text>
    </g>
  </Scene>
);

const CameraBubble = () => (
  <GlyphSvg width="25" height="17" viewBox="0 0 25 17" aria-hidden="true">
    <path d="M12 0C19 0 24 3 24 8c0 2-1 4-2 5l2 3-5-1c-2 1-4 1-7 1C5 16 0 13 0 8S5 0 12 0z" fill="#fff" />
    <path d="M6 4h3l1-1h5l1 1h3v9H6z" fill="#005c9a" />
    <circle cx="12.500" cy="8.300" r="3" fill="none" stroke="#fff" strokeWidth="1.200" />
  </GlyphSvg>
);

export default function App() {
  return (
    <Page>
      <GlobalStyle />
      <Header>
        <Project href="#project">
          <Logo />
          <LockSlot>
            <Glyph name="lock" size={28} />
          </LockSlot>
          F1_Workshop_Session_1
        </Project>
        <Tabs>
          <Tab href="#mesh" $active>
            <GridIcon />
            Mesh Creator
          </Tab>
          <Tab href="#simulation">
            <FaCogs size={19} />
            Simulation Designer
          </Tab>
          <Tab href="#post">
            <Glyph name="certificate" size={18} />
            Post-Processor
            <Beta>BETA</Beta>
          </Tab>
        </Tabs>
        <Menu>
          <MenuLink href="#dashboard">Dashboard</MenuLink>
          <MenuLink href="#projects">Public Projects</MenuLink>
          <MenuLink href="#forum">Forum</MenuLink>
          <MenuLink href="#help">
            Help <Caret />
          </MenuLink>
          <MenuLink href="#user" $user>
            AsadAli <Caret />
          </MenuLink>
        </Menu>
      </Header>

      <Workspace>
        <Panel>
          <PanelBar>
            <ActionButton type="button">
              <Glyph name="upload" size={13} />
              <Caret />
              Upload CAD/mesh
            </ActionButton>
            <ActionButton type="button">
              <Glyph name="download" size={13} />
              <Caret />
              Import
            </ActionButton>
          </PanelBar>
          <TreeArea>
            <Branch>
              {tree.map((node) => (
                <TreeNode key={node.label} node={node} />
              ))}
            </Branch>
          </TreeArea>
          <Jobs>
            <JobsTitle>Job Status</JobsTitle>
            <JobsBody>
              <JobsTable>
                <thead>
                  <tr>
                    <th scope="col">Name</th>
                    <th scope="col">Status</th>
                  </tr>
                </thead>
                <tbody>
                  <tr>
                    <td colSpan={2}>no entities available</td>
                  </tr>
                </tbody>
              </JobsTable>
            </JobsBody>
          </Jobs>
        </Panel>

        <Splitter />

        <Panel>
          <PanelBar $inset>
            <FormTitle>Mesh Refinements</FormTitle>
            <SaveFrame>
              <SaveButton type="button">
                <Glyph name="floppy" size={12} />
                Save
              </SaveButton>
            </SaveFrame>
          </PanelBar>
          <Form>
            {mainFields.map((spec) => (
              <FormField key={spec.id} spec={spec} />
            ))}
            <DetailsHeading>Details</DetailsHeading>
            <Group>
              {detailFields.map((spec) => (
                <FormField key={spec.id} spec={spec} inner />
              ))}
            </Group>
          </Form>
        </Panel>

        <Splitter />

        <Viewer>
          <Toolbar>
            <ToolGroup $narrow>
              <ToolButton type="button" aria-label="Zoom in">
                <Glyph name="zoomIn" size={13} />
              </ToolButton>
              <ToolButton type="button" aria-label="Zoom out">
                <Glyph name="zoomOut" size={13} />
              </ToolButton>
              <ToolButton type="button" aria-label="Reset view">
                <Glyph name="refresh" size={13} />
              </ToolButton>
            </ToolGroup>
            <Divider />
            <ToolButton type="button">
              Orientation <Caret />
            </ToolButton>
            <Divider />
            <RenderMode>
              <select aria-label="Render mode" defaultValue="surfaces with wireframe">
                <option>surfaces with wireframe</option>
              </select>
              <SelectArrow />
            </RenderMode>
            <ToolGroup>
              <ToolButton type="button" aria-label="Pick volumes">
                <PickIcon mode="solid" />
              </ToolButton>
              <ToolButton type="button" aria-label="Pick faces" aria-pressed="true">
                <PickIcon mode="face" />
              </ToolButton>
              <ToolButton type="button" aria-label="Pick edges">
                <PickIcon mode="edge" />
              </ToolButton>
              <ToolButton type="button" aria-label="Pick points">
                <PickIcon mode="point" />
              </ToolButton>
            </ToolGroup>
            <Divider />
            <ToolSet>
              <ToolButton type="button">
                Selection <Caret />
              </ToolButton>
              <ToolGroup>
                <ToolButton type="button" aria-label="Hide selection">
                  <Glyph name="eyeSlash" size={13} />
                </ToolButton>
                <ToolButton type="button" aria-label="Show all">
                  <Glyph name="eye" size={13} />
                </ToolButton>
              </ToolGroup>
            </ToolSet>
            <Divider />
            <ToolSet>
              <ToolButton type="button">Create set</ToolButton>
              <ToolButton type="button">
                Filter <Caret />
              </ToolButton>
            </ToolSet>
          </Toolbar>
          <Canvas>
            <Wing />
            <ScenePanel>
              <ul>
                <li>
                  <SceneRow>
                    <ToggleBox open /> Scene
                  </SceneRow>
                  <ul>
                    <li>
                      <SceneRow>
                        <ToggleBox open /> Frontwing
                      </SceneRow>
                      <ul>
                        <li>
                          <SceneRow $kind="eye">
                            <ToggleBox open={false} /> <SolidEye color="#7c7c74" /> solid_0
                          </SceneRow>
                        </li>
                      </ul>
                    </li>
                    <li>
                      <SceneRow>
                        <ToggleBox open /> Geometry Primitives
                      </SceneRow>
                      <ul>
                        {["_BaseMeshBox", "MaterialPoint", "Cartesian Box"].map((name) => (
                          <li key={name}>
                            <SceneRow $kind="hidden">
                              <SolidEye color="#bdbdbd" /> {name}
                            </SceneRow>
                          </li>
                        ))}
                      </ul>
                    </li>
                  </ul>
                </li>
              </ul>
              <ResizeGrip />
            </ScenePanel>
            <Picked>
              solid_0
              <ResizeGrip />
            </Picked>
          </Canvas>
        </Viewer>
      </Workspace>

      <Report type="button">
        <CameraBubble />
        Report an issue
      </Report>
    </Page>
  );
}
